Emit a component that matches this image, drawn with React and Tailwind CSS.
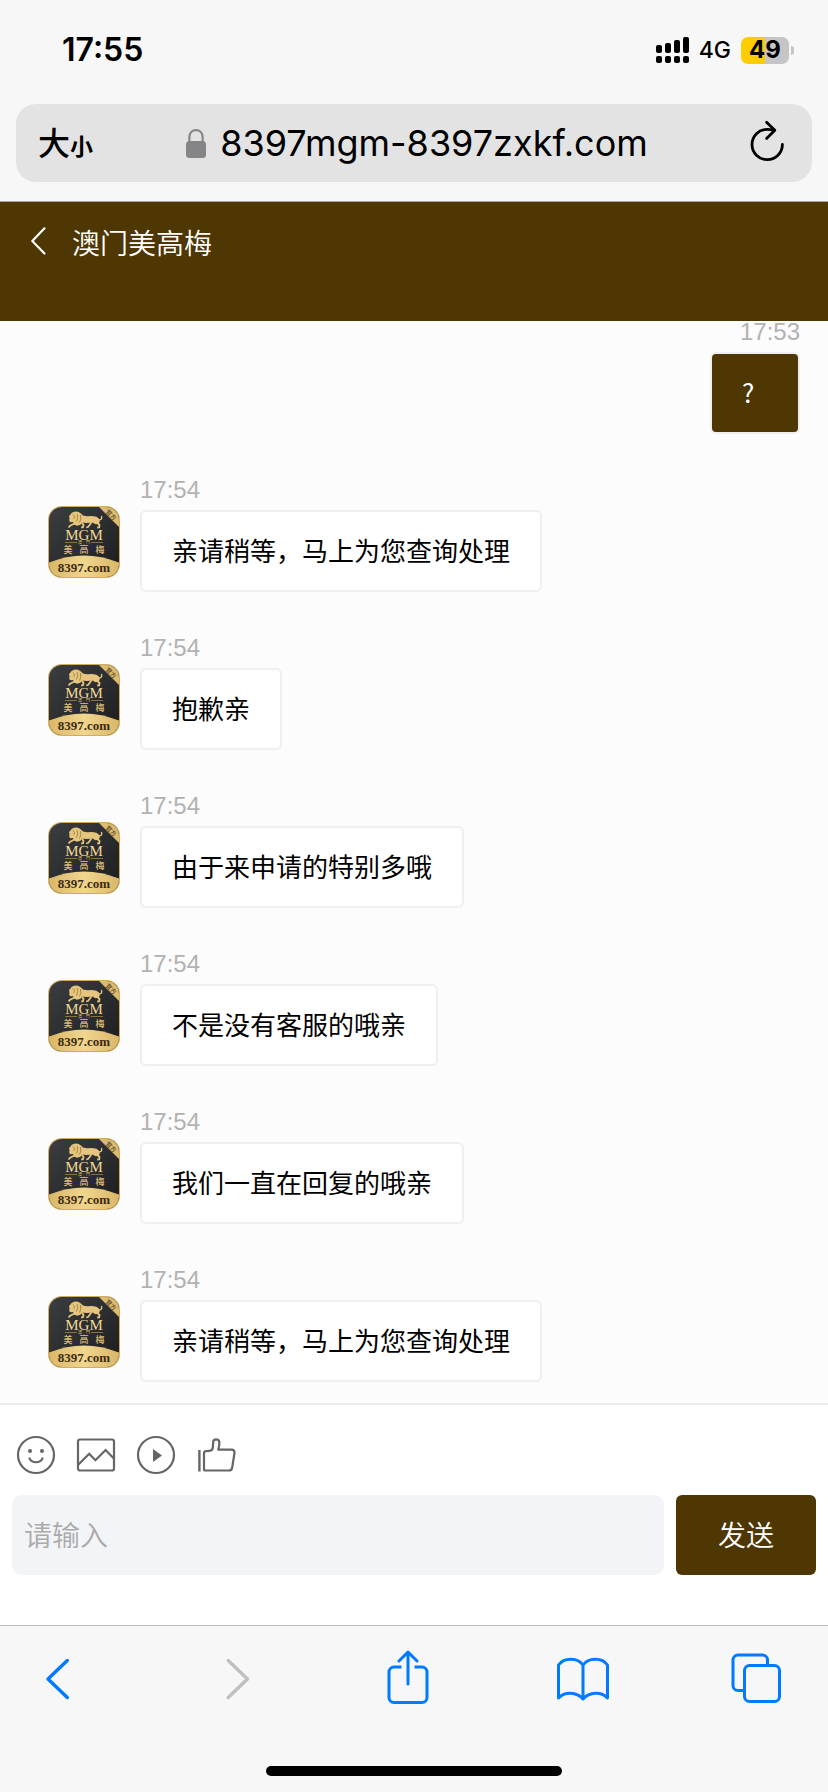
import { useId, useState } from 'react';

const messages = [
  { id: 1, time: '17:53', text: '?', mine: true },
  { id: 2, time: '17:54', text: '亲请稍等，马上为您查询处理' },
  { id: 3, time: '17:54', text: '抱歉亲' },
  { id: 4, time: '17:54', text: '由于来申请的特别多哦' },
  { id: 5, time: '17:54', text: '不是没有客服的哦亲' },
  { id: 6, time: '17:54', text: '我们一直在回复的哦亲' },
  { id: 7, time: '17:54', text: '亲请稍等，马上为您查询处理' },
];

function StatusBar() {
  return (
    <div className="flex h-[104px] items-center justify-between pr-[34px] pb-1 pl-[62px] font-['Inter',sans-serif]">
      <span className="text-[32px] leading-10 font-semibold">17:55</span>
      <div className="flex items-center">
        <svg width="33" height="26" viewBox="0 0 33 26" aria-hidden="true">
          <rect x="0" y="8" width="6" height="8" rx="2" />
          <rect x="9" y="6" width="6" height="10" rx="2" />
          <rect x="18" y="3" width="6" height="13" rx="2" />
          <rect x="27" y="0" width="6" height="16" rx="2" />
          <rect x="0" y="19" width="6" height="7" rx="2" />
          <rect x="9" y="19" width="6" height="7" rx="2" />
          <rect x="18" y="19" width="6" height="7" rx="2" />
          <rect x="27" y="19" width="6" height="7" rx="2" />
        </svg>
        <span className="ml-[10px] text-[23px] leading-7 font-medium">4G</span>
        <div className="ml-[10px] flex h-[27px] w-12 items-center justify-center rounded-[7px] bg-linear-to-r from-[#ffcc00] from-50% to-[#c5c5c7] to-50% text-2xl leading-7 font-bold">
          49
        </div>
        <div className="ml-[2px] h-[9px] w-[3px] rounded-r-full bg-[#c5c5c7]" />
      </div>
    </div>
  );
}

function AddressBar() {
  return (
    <div className="px-4 pb-[19px]">
      <div className="flex h-[78px] items-center justify-between rounded-[20px] bg-[#e3e3e3] pr-7 pl-[22px]">
        <button type="button" aria-label="大小" className="flex w-[60px] items-baseline font-['Noto_Sans_CJK_SC',sans-serif] leading-10 font-medium">
          <span className="text-[32px]">大</span>
          <span className="text-[23px] font-bold">小</span>
        </button>
        <div className="flex items-center gap-[14px] pr-3">
          <svg width="20" height="29" viewBox="0 0 20 29" aria-hidden="true">
            <path d="M3.4 13V8.2C3.4 4 6.2 1.2 10 1.2s6.6 2.8 6.6 7V13" fill="none" stroke="#858587" strokeWidth="2.2" />
            <rect y="12" width="20" height="17" rx="3.5" fill="#858587" />
          </svg>
          <span className="font-['Inter',sans-serif] text-[36px] leading-11">8397mgm-8397zxkf.com</span>
        </div>
        <button type="button" aria-label="Reload" className="flex w-[36px] justify-end pb-1">
          <svg width="36" height="42" viewBox="0 0 36 42" fill="none" stroke="#000" strokeWidth="2.8" strokeLinecap="round" strokeLinejoin="round">
            <path d="M34.4 24.5A15.2 15.2 0 1 1 19.2 9.3c2.6 0 5 .4 7.3.9" />
            <path d="M18.6 2.3 26.8 10.2l-8.2 8.2" />
          </svg>
        </button>
      </div>
    </div>
  );
}

function ChatHeader() {
  return (
    <header className="flex h-[120px] items-start border-t border-[#a9a79f] bg-[#4f3703] pt-[18px] pl-[30px] text-white">
      <button type="button" aria-label="返回" className="flex h-[42px] w-[42px] items-center">
        <svg width="17" height="30" viewBox="0 0 17 30" fill="none" stroke="currentColor" strokeWidth="2.2" strokeLinecap="round" strokeLinejoin="round">
          <path d="M14.5 2.3 2.3 15l12.2 12.5" />
        </svg>
      </button>
      <h1 className="text-[28px] leading-11 font-[350]">澳门美高梅</h1>
    </header>
  );
}

function Avatar() {
  const id = useId();
  const gold = `${id}-gold`;
  const dark = `${id}-dark`;
  const clip = `${id}-clip`;

  return (
    <svg className="mt-[27px] shrink-0" width="72" height="72" viewBox="0 0 72 72" role="img" aria-label="MGM 8397.com">
      <defs>
        <linearGradient id={gold} x1="0" y1="0" x2="1" y2="0">
          <stop offset="0" stopColor="#d9b667" />
          <stop offset="0.5" stopColor="#f0d68e" />
          <stop offset="1" stopColor="#d9b667" />
        </linearGradient>
        <linearGradient id={dark} x1="0" y1="0" x2="1" y2="1">
          <stop offset="0" stopColor="#3b3d40" />
          <stop offset="1" stopColor="#1c1d1f" />
        </linearGradient>
        <clipPath id={clip}>
          <rect x="1" y="1" width="70" height="70" rx="13" />
        </clipPath>
      </defs>
      <rect width="72" height="72" rx="14" fill="#cfac60" />
      <g clipPath={`url(#${clip})`}>
        <rect x="1" y="1" width="70" height="70" fill={`url(#${dark})`} />
        <path d="M0 57Q36 42 72 57v15H0z" fill={`url(#${gold})`} />
        <path d="M50 0h22v22z" fill="#dcbb70" />
      </g>
      {/* lion: mane and body, then legs, then tail */}
      <path
        d="M21.5 12.5 21 10l1.500-1.500L23.500 7l2.500-1.300 3-.2 2.500 1L33.500 8l1.500 1.500 4 .8 5-.3 4.500.8 2.500 2 .8 2.700-1.300 2.300-3 .4-3-1.700-6 .5-4.500-.5-1.500 2.300-3.500 1-3-1.300-1-2.500-2.500.2-1.300-1.200z"
        fill="#e6c67e"
      />
      <path
        d="m27.5 17-3 1.500-2.500 1.300-1.500 1.700M34 16.500l1.500 2.500-.5 2.200-1.800.3M43.500 16l-1.500 2.500-2 2.500-1.800.5M50 14.500l-.5 2.500 2 2-.3 2.400-2 .1"
        fill="none"
        stroke="#e6c67e"
        strokeWidth="1.8"
        strokeLinejoin="round"
      />
      <path d="M50 13.500c3 1 4.500-.5 3.500-3" fill="none" stroke="#e6c67e" strokeWidth="1.4" strokeLinecap="round" />
      <path d="m25 8.500 1.500 2-.7 2.500m3.200-5 .8 3.500-1.300 4M32.500 9l.3 4-1.300 3.500" fill="none" stroke="#8b6b32" strokeWidth="0.7" />
      <g textAnchor="middle" fill="#f3d993" className="font-['Liberation_Serif',serif]">
        <text x="36" y="34" fontSize="15">MGM</text>
        <text x="36" y="66" fontSize="13" fontWeight="700" fill="#3c2a12">8397.com</text>
      </g>
      <path d="M17 36.5h12M43 36.5h12" stroke="#a78444" strokeWidth="0.8" />
      <g textAnchor="middle" fill="#dfbd76" className="font-['Noto_Sans_CJK_SC',sans-serif]">
        <text x="32" y="38" fontSize="4">澳</text>
        <text x="40" y="38" fontSize="4">門</text>
        <text x="20" y="47" fontSize="9" fontWeight="500">美</text>
        <text x="36" y="47" fontSize="9" fontWeight="500">高</text>
        <text x="52" y="47" fontSize="9" fontWeight="500">梅</text>
        <text x="63" y="11" fontSize="6" fontWeight="500" fill="#4e3b1c" transform="rotate(45 63 9)">官方</text>
      </g>
    </svg>
  );
}

function Message({ time, text, mine }) {
  if (mine) {
    return (
      <li className="flex flex-col items-end">
        <time className="mb-[9px] font-['Liberation_Sans',sans-serif] text-2xl leading-[22px] text-[#b2b2b2]">{time}</time>
        <p className="min-w-[90px] rounded-md border-2 border-[#efefef] bg-[#4f3703] px-[30px] pt-[19px] pb-[21px] text-[26px] leading-[38px] text-white">
          {text}
        </p>
      </li>
    );
  }

  return (
    <li className="flex items-start gap-5 pl-5">
      <Avatar />
      <div className="flex flex-col items-start">
        <time className="mb-[9px] font-['Liberation_Sans',sans-serif] text-2xl leading-[22px] text-[#b2b2b2]">{time}</time>
        <p className="rounded-md border-2 border-[#efefef] bg-white px-[30px] pt-[19px] pb-[21px] text-[26px] leading-[38px]">{text}</p>
      </div>
    </li>
  );
}

function Composer() {
  const [value, setValue] = useState('');

  return (
    <form className="border-t-2 border-[#ebebeb] bg-white px-3 pt-[30px] pb-[50px]" onSubmit={(e) => e.preventDefault()}>
      <div className="flex gap-5 px-1 text-[#666]">
        <button type="button" aria-label="表情">
          <svg width="40" height="40" viewBox="0 0 40 40" fill="none" stroke="currentColor" strokeWidth="2.2">
            <circle cx="20" cy="20" r="18" />
            <circle cx="14" cy="16" r="2" fill="currentColor" stroke="none" />
            <circle cx="26" cy="16" r="2" fill="currentColor" stroke="none" />
            <path d="M13.5 23.5c2.8 5 10.2 5 13 0" strokeLinecap="round" />
          </svg>
        </button>
        <button type="button" aria-label="图片">
          <svg width="40" height="40" viewBox="0 0 40 40" fill="none" stroke="currentColor" strokeWidth="2.2">
            <rect x="2" y="4.5" width="36" height="31" rx="2" />
            <path d="m2.5 29.5 10.7-10.7 6.2 6.4L29.6 15l8 8.3" />
          </svg>
        </button>
        <button type="button" aria-label="视频">
          <svg width="40" height="40" viewBox="0 0 40 40" fill="none" stroke="currentColor" strokeWidth="2.2">
            <circle cx="20" cy="20" r="18" />
            <path d="M17 14v13l9-6.5z" fill="currentColor" stroke="none" />
          </svg>
        </button>
        <button type="button" aria-label="评价">
          <svg width="40" height="40" viewBox="0 0 40 40" fill="none" stroke="currentColor" strokeWidth="2.2" strokeLinejoin="round">
            <path d="M3.4 15v21.5" strokeWidth="2.4" />
            <path d="M8 34V18.5c0-1.4.7-2.2 2-2.3l3.5-.4c1.9-.2 3.1-1.2 3.3-3.2l.4-5.6c.1-1.7 1.3-2.7 2.9-2.7 2 0 3.3 1.2 3.3 3.4 0 2.4-.7 4.7-1.1 7h13.2c2.2 0 3.3 1.3 3 3.3l-2.3 14.5c-.3 1.9-1.3 3-3.1 3H9.5C8.5 35.5 8 35 8 34z" />
          </svg>
        </button>
      </div>
      <div className="mt-5 flex gap-3">
        <input
          type="text"
          aria-label="请输入"
          placeholder="请输入"
          value={value}
          onChange={(e) => setValue(e.target.value)}
          className="h-20 min-w-0 flex-1 rounded-[10px] bg-[#f3f4f8] px-3 pb-[2px] text-[28px] font-[350] placeholder:text-[#aaa]"
        />
        <button type="submit" className="h-20 w-[140px] rounded-md bg-[#4f3703] pb-[2px] text-[28px] font-[350] text-white">
          发送
        </button>
      </div>
    </form>
  );
}

function BrowserToolbar() {
  return (
    <footer className="border-t border-[#bcbcbe] bg-[#f7f7f7] pt-[23px] pb-4">
      <nav className="flex justify-between pr-[42px] pl-7 text-[#007aff]">
        <button type="button" aria-label="Back">
          <svg width="60" height="60" viewBox="0 0 60 60" fill="none" stroke="currentColor" strokeWidth="3.4" strokeLinecap="round" strokeLinejoin="round">
            <path d="M39.3 11.5 20 30l19.3 18.5" />
          </svg>
        </button>
        <button type="button" aria-label="Forward" disabled className="text-[#bfbfbf]">
          <svg width="60" height="60" viewBox="0 0 60 60" fill="none" stroke="currentColor" strokeWidth="3.4" strokeLinecap="round" strokeLinejoin="round">
            <path d="M25.2 11.5 44.5 30 25.2 48.5" />
          </svg>
        </button>
        <button type="button" aria-label="Share">
          <svg width="60" height="60" viewBox="0 0 60 60" fill="none" stroke="currentColor" strokeWidth="3" strokeLinejoin="round">
            <path d="M24.500 18H17a5 5 0 0 0-5 5v25.500a5 5 0 0 0 5 5h28a5 5 0 0 0 5-5V23a5 5 0 0 0-5-5h-7.500" />
            <path d="M31 35V3.500M22 12l9-9 9 9" strokeLinecap="round" />
          </svg>
        </button>
        <button type="button" aria-label="Bookmarks">
          <svg width="60" height="60" viewBox="0 0 60 60" fill="none" stroke="currentColor" strokeWidth="3" strokeLinejoin="round">
            <path d="M31 16v34M31 16c-5-7.500-19-8-24.500 0v33c6-6.500 18-6.500 24.500 1 6.500-7.500 18.500-7.500 24.500-1V16C50 8 36 8.500 31 16z" />
          </svg>
        </button>
        <button type="button" aria-label="Tabs">
          <svg width="60" height="60" viewBox="0 0 60 60" fill="none" stroke="currentColor" strokeWidth="3">
            <rect x="18.5" y="16.5" width="35" height="36" rx="5" />
            <path d="M18 41.5h-6a5 5 0 0 1-5-5V11a5 5 0 0 1 5-5h24.500a5 5 0 0 1 5 5v5" />
          </svg>
        </button>
      </nav>
      <div className="mx-auto mt-[57px] h-[10px] w-[296px] rounded-full bg-black" />
    </footer>
  );
}

export default function App() {
  return (
    <div className="flex min-h-screen flex-col bg-[#fcfcfc] font-['Noto_Sans_CJK_SC',sans-serif] text-black">
      <div className="bg-[#f7f7f7]">
        <StatusBar />
        <AddressBar />
      </div>
      <ChatHeader />
      <main className="flex-1 px-7 pb-[21px]">
        <ul className="flex flex-col gap-[45px]">
          {messages.map((m) => (
            <Message key={m.id} time={m.time} text={m.text} mine={m.mine} />
          ))}
        </ul>
      </main>
      <Composer />
      <BrowserToolbar />
    </div>
  );
}
